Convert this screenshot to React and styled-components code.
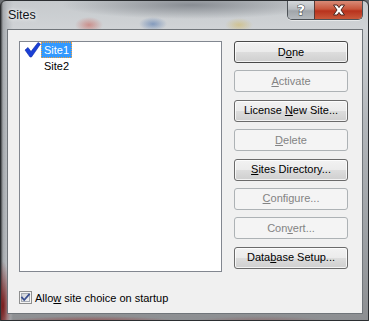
import React from "react";
import styled, { createGlobalStyle, css } from "styled-components";

const Global = createGlobalStyle`
  html, body { margin: 0; padding: 0; background: #6b6f73; }
  body { font-family: "Liberation Sans", Arial, sans-serif; }
`;

const Window = styled.div`
  box-sizing: border-box;
  width: 369px;
  height: 321px;
  display: flex;
  flex-direction: column;
  border: 1px solid #2b2e31;
  border-radius: 6px 6px 0 0;
  overflow: hidden;
  background:
    radial-gradient(ellipse 8px 45px at 2px 305px, #7a1a1a 0%, rgba(122,26,26,0) 100%),
    radial-gradient(ellipse 90px 6px at 90px 321px, rgba(150,50,50,0.7) 0%, rgba(150,50,50,0) 100%),
    radial-gradient(ellipse 70px 6px at 260px 321px, rgba(140,70,70,0.45) 0%, rgba(140,70,70,0) 100%),
    radial-gradient(ellipse 14px 8px at 88px 24px, rgba(200,90,80,0.55) 0%, rgba(200,90,80,0) 100%),
    radial-gradient(ellipse 14px 7px at 152px 23px, rgba(70,110,170,0.55) 0%, rgba(70,110,170,0) 100%),
    radial-gradient(ellipse 14px 7px at 238px 24px, rgba(210,180,80,0.5) 0%, rgba(210,180,80,0) 100%),
    radial-gradient(ellipse 130px 14px at 190px 4px, rgba(120,125,132,0.8) 0%, rgba(120,125,132,0) 100%),
    linear-gradient(90deg, #4a4c4e 0px, #a4a8ac 2px, #b9bdc1 6px, rgba(185,189,193,0) 12px),
    linear-gradient(180deg, #c6cacd 0px, #d0d3d6 28px, #b3b7bb 120px, #9a9ea2 250px, #8d8f92 100%);
`;

const TitleBar = styled.div`
  height: 28px;
  display: flex;
  align-items: flex-start;
  justify-content: space-between;
  flex: none;
`;

const Title = styled.div`
  padding: 7px 0 0 7px;
  font-family: "Liberation Sans", Arial, sans-serif;
  font-size: 12.5px;
  color: #101418;
  text-shadow: 0 0 6px rgba(255,255,255,0.9), 0 0 3px rgba(255,255,255,0.9);
`;

const CaptionButtons = styled.div`
  display: flex;
  margin-right: 5px;
  border: 1px solid #4d5257;
  border-top: none;
  border-radius: 0 0 5px 5px;
  overflow: hidden;
  box-shadow: 0 1px 0 rgba(255,255,255,0.5);
`;

const CapBtn = styled.div`
  height: 18px;
  display: flex;
  align-items: center;
  justify-content: center;
  ${(p) =>
    p.$close
      ? css`
          width: 47px;
          background: linear-gradient(180deg, #d98b78 0%, #c8563c 45%, #b8321d 55%, #c9593b 100%);
          border-left: 1px solid #5a3a35;
        `
      : css`
          width: 26px;
          background: linear-gradient(180deg, #d5d8db 0%, #b9bdc1 45%, #a0a5aa 55%, #b5babe 100%);
        `}
`;

const HelpGlyph = styled.span`
  font-family: "DejaVu Sans", sans-serif;
  font-weight: bold;
  font-size: 14px;
  line-height: 14px;
  color: #fff;
  -webkit-text-stroke: 1px #3a3f44;
  paint-order: stroke fill;
`;

const Client = styled.div`
  flex: 1;
  margin: 0 5px 6px 6px;
  border: 1px solid #70757a;
  background: #f0f0f0;
  box-sizing: border-box;
  display: flex;
  flex-direction: column;
  padding: 11px 0 0 11px;
`;

const MainRow = styled.div`
  display: flex;
  gap: 12px;
`;

const ListBox = styled.div`
  box-sizing: border-box;
  width: 203px;
  height: 231px;
  border: 1px solid #828790;
  background: #fff;
  display: flex;
  flex-direction: column;
`;

const Item = styled.div`
  height: 16px;
  display: flex;
  align-items: center;
  padding-left: 4px;
  font-size: 11px;
  color: #000;
`;

const IconSlot = styled.span`
  width: 17px;
  height: 16px;
  display: flex;
  align-items: center;
  justify-content: center;
`;

const ItemText = styled.span`
  box-sizing: border-box;
  height: 16px;
  line-height: 14px;
  padding: 0 2px 0 2px;
  border: 1px dotted transparent;
  ${(p) =>
    p.$selected &&
    css`
      background: #3399ff;
      color: #fff;
      border-color: #f0a040;
    `}
`;

const ButtonColumn = styled.div`
  display: flex;
  flex-direction: column;
  gap: 7.4px;
`;

const Button = styled.div`
  box-sizing: border-box;
  width: 114px;
  height: 22px;
  border-radius: 3px;
  display: flex;
  align-items: center;
  justify-content: center;
  font-size: 11px;
  padding-bottom: 1px;
  ${(p) =>
    p.$disabled
      ? css`
          border: 1px solid #adb2b5;
          background: #f4f4f4;
          color: #838383;
        `
      : css`
          border: 1px solid #6a6a6a;
          color: #000;
          background: linear-gradient(180deg, #f2f2f2 0%, #ebebeb 50%, #dddddd 50%, #cfcfcf 100%);
          box-shadow: inset 0 0 0 1px rgba(255, 255, 255, 0.75);
        `}
  ${(p) =>
    p.$default &&
    css`
      border-color: #4a4a4a;
    `}
  u { text-decoration: underline; text-underline-offset: 1px; }
`;

const CheckRow = styled.label`
  display: flex;
  align-items: center;
  gap: 3px;
  margin-top: 19px;
  font-size: 11px;
  color: #000;
  u { text-underline-offset: 1px; }
`;

const CheckBox = styled.span`
  width: 13px;
  height: 13px;
  display: inline-block;
  flex: none;
`;

const BlueCheck = () => (
  <svg width="17" height="16" viewBox="0 0 17 16">
    <path d="M1 8 L4 5.5 L7 9.5 L14 0.5 L16.5 2 L7.5 15 L6 15 Z" fill="#1a3fd6" stroke="#0b2aa8" strokeWidth="0.6" strokeLinejoin="round" />
  </svg>
);

const CloseGlyph = () => (
  <svg width="14" height="12" viewBox="0 0 14 12">
    <path
      d="M1.5 1 L5.2 1 L7 3.6 L8.8 1 L12.5 1 L9 6 L12.5 11 L8.8 11 L7 8.4 L5.2 11 L1.5 11 L5 6 Z"
      fill="#fff"
      stroke="#4a2620"
      strokeWidth="1"
      strokeLinejoin="round"
    />
  </svg>
);

const CheckBoxIcon = () => (
  <svg width="13" height="13" viewBox="0 0 13 13">
    <defs>
      <linearGradient id="cbg" x1="0" y1="0" x2="1" y2="1">
        <stop offset="0" stopColor="#cbcfd5" />
        <stop offset="1" stopColor="#f6f6f6" />
      </linearGradient>
    </defs>
    <rect x="0.5" y="0.5" width="12" height="12" fill="#f4f4f4" stroke="#8e8f8f" />
    <rect x="2.5" y="2.5" width="8" height="8" fill="url(#cbg)" stroke="#a5abb3" strokeWidth="1" />
    <path d="M3 6.5 L5.2 9 L10 3.5" fill="none" stroke="#3a4f8f" strokeWidth="1.8" strokeLinecap="square" />
  </svg>
);

const buttons = [
  { pre: "D", key: "o", post: "ne", def: true },
  { pre: "", key: "A", post: "ctivate", dis: true },
  { pre: "License ", key: "N", post: "ew Site..." },
  { pre: "", key: "D", post: "elete", dis: true },
  { pre: "", key: "S", post: "ites Directory..." },
  { pre: "", key: "C", post: "onfigure...", dis: true },
  { pre: "Con", key: "v", post: "ert...", dis: true },
  { pre: "Data", key: "b", post: "ase Setup..." },
];

export default function App() {
  return (
    <>
      <Global />
      <Window>
        <TitleBar>
          <Title>Sites</Title>
          <CaptionButtons>
            <CapBtn>
              <HelpGlyph>?</HelpGlyph>
            </CapBtn>
            <CapBtn $close>
              <CloseGlyph />
            </CapBtn>
          </CaptionButtons>
        </TitleBar>
        <Client>
          <MainRow>
            <ListBox>
              <Item>
                <IconSlot>
                  <BlueCheck />
                </IconSlot>
                <ItemText $selected>Site1</ItemText>
              </Item>
              <Item>
                <IconSlot />
                <ItemText>Site2</ItemText>
              </Item>
            </ListBox>
            <ButtonColumn>
              {buttons.map((b, i) => (
                <Button key={i} $disabled={b.dis} $default={b.def}>
                  <span>
                    {b.pre}
                    <u>{b.key}</u>
                    {b.post}
                  </span>
                </Button>
              ))}
            </ButtonColumn>
          </MainRow>
          <CheckRow>
            <CheckBox>
              <CheckBoxIcon />
            </CheckBox>
            <span>
              Allo<u>w</u> site choice on startup
            </span>
          </CheckRow>
        </Client>
      </Window>
    </>
  );
}
